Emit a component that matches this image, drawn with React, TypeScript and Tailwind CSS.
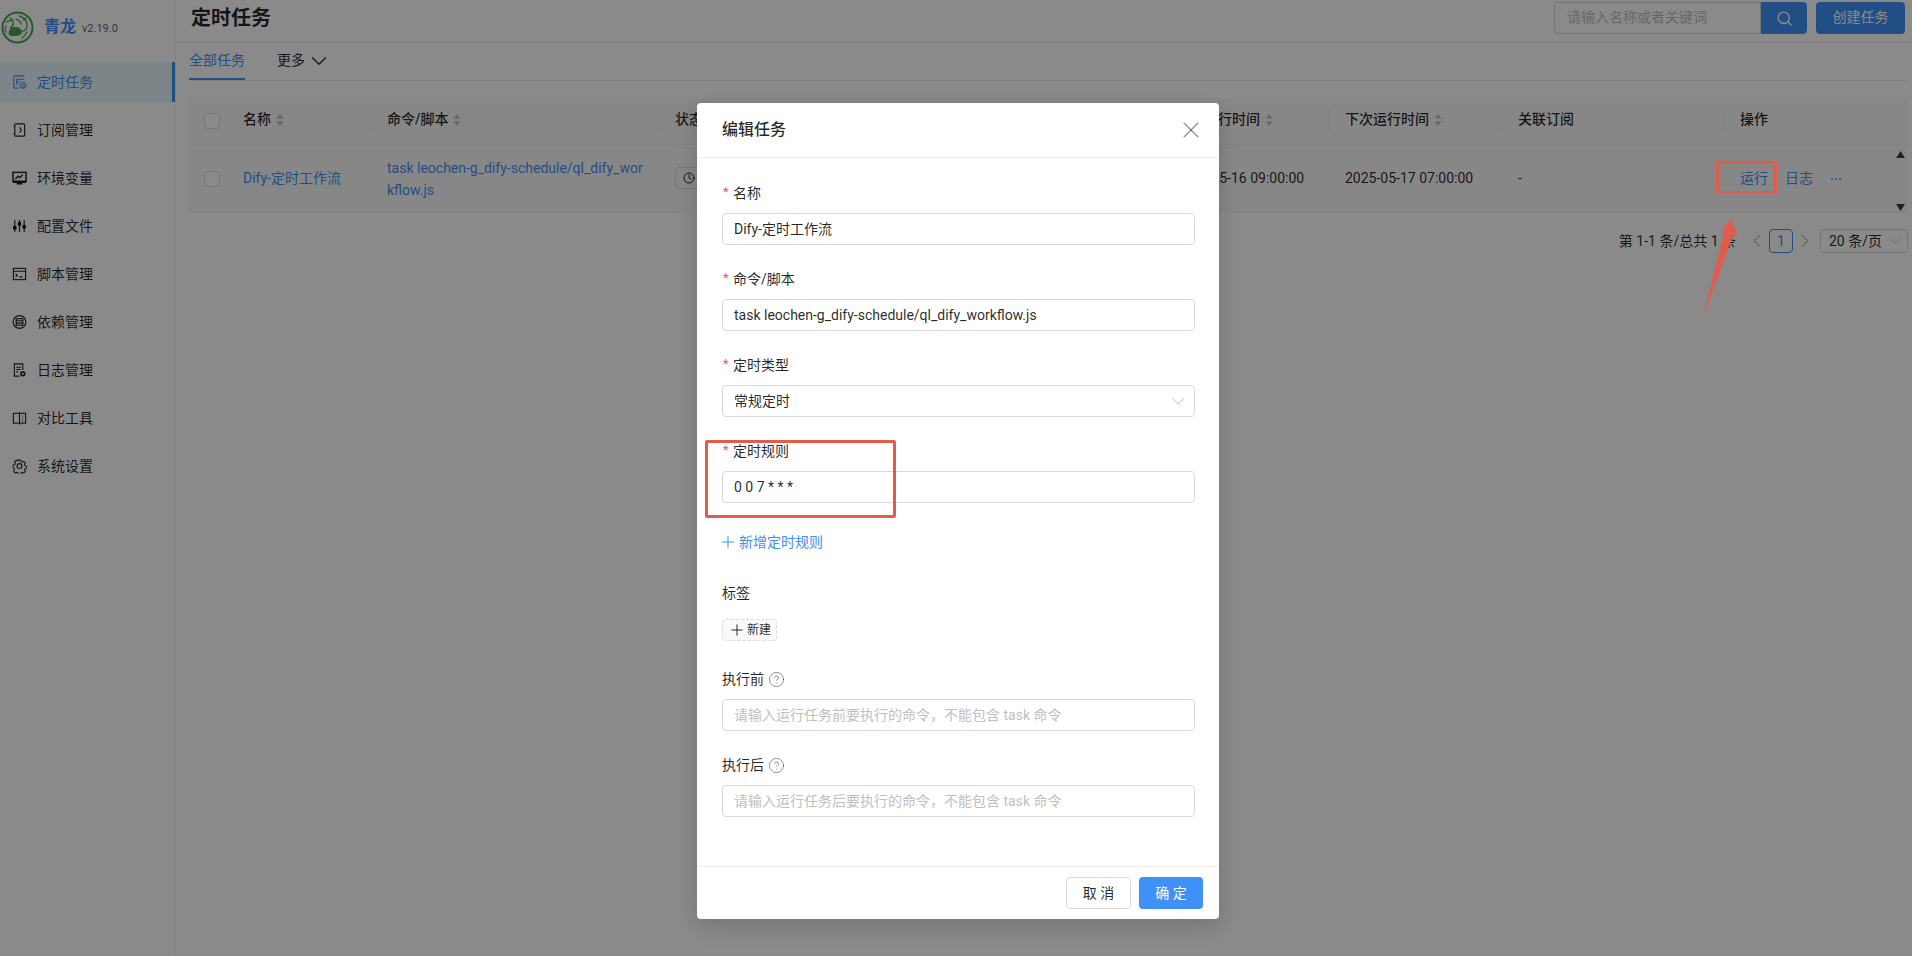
import React from "react";
import { Plus, X, ChevronDown, ChevronLeft, ChevronRight, Search, Clock, CircleHelp, Ellipsis } from "lucide-react";

const FONT = "[font-family:Roboto,'Noto_Sans_CJK_SC',sans-serif]";

const stroke = { fill: "none", stroke: "currentColor", strokeWidth: 1.2 };
const menuIcons: React.ReactNode[] = [
  <g {...stroke}><path d="M2 1.5h11M2 1.5v13M2 14.5h5M5 5h8M5 8h3M5 5v6" /><rect x="8.5" y="8.5" width="6" height="6" rx="3" /><path d="M11.5 10v2h1.5" /></g>,
  <g {...stroke}><rect x="3" y="1.5" width="10.5" height="13" rx="1" /><path d="M3 4H1.5M3 12H1.5M8 5l2 3-2 3" /></g>,
  <g {...stroke}><rect x="1" y="2" width="14" height="9.5" strokeWidth="1.6" /><path d="M3.5 9l3-3 2 1.5 3-3M5 14h6M1 12.5h14" strokeWidth="1.6" /></g>,
  <g {...stroke}><path d="M3 1.5v13M8 1.5v13M13 1.5v13" /><rect x="1.8" y="8.5" width="2.4" height="2.6" fill="currentColor" /><rect x="6.8" y="4.5" width="2.4" height="2.6" fill="currentColor" /><rect x="11.8" y="7.5" width="2.4" height="2.6" fill="currentColor" /></g>,
  <g {...stroke}><rect x="1.5" y="2" width="13" height="12" /><path d="M1.5 5h13M4 8l1.5 1.5L4 11M8 11h3" /></g>,
  <g {...stroke}><circle cx="8" cy="8" r="6.8" /><rect x="4.5" y="4.5" width="7" height="7" /><path d="M4.5 6.7h7M4.5 9.2h7" /></g>,
  <g {...stroke}><path d="M8 14.5H2.5v-13h9V8M4.5 5h5M4.5 7.5h5M4.5 10h2" /><circle cx="11.5" cy="12" r="2" strokeWidth="1.8" /></g>,
  <g {...stroke}><rect x="1.5" y="3" width="13" height="10.5" /><path d="M8 1.5v13.5" /><path d="M11 6h1M11 8.5h1M11 11h1" /></g>,
  <g {...stroke}><path d="M6.6 1h2.8l.4 1.9 1.5.7 1.7-1 1.9 1.9-1 1.7.7 1.5 1.9.4v2.8l-1.9.4-.7 1.5 1 1.7-1.9 1.9-1.7-1-1.5.7-.4 1.9H6.6l-.4-1.9-1.5-.7-1.7 1-1.9-1.9 1-1.7-.7-1.5L.5 9.4V6.6l1.9-.4.7-1.5-1-1.7 1.9-1.9 1.7 1 1.5-.7z" transform="translate(0.8 0.8) scale(0.9)" /><circle cx="8" cy="8" r="2.6" /></g>,
];
const menus = ["定时任务", "订阅管理", "环境变量", "配置文件", "脚本管理", "依赖管理", "日志管理", "对比工具", "系统设置"];

function Sorter() {
  return (
    <svg width="10" height="14" viewBox="0 0 10 14" className="ml-1 shrink-0 text-[#bfbfbf]">
      <path d="M5 1l3.6 4.6H1.4zM5 13L1.4 8.4h7.2z" fill="currentColor" />
    </svg>
  );
}

function Logo() {
  return (
    <svg width="33" height="33" viewBox="0 0 33 33" className="shrink-0 text-[#3fa552]">
      <circle cx="16.5" cy="16.5" r="15" fill="none" stroke="currentColor" strokeWidth="2" />
      <g fill="none" stroke="currentColor" strokeWidth="1.3" strokeLinecap="round">
        <path d="M5 11c3-2 6-2 7 0s0 4-2 5 1 2 3 1" />
        <path d="M9 24c-2-3 0-6 3-7 4-1 7 0 8 3s-1 4-4 4-5 1-7 0z" fill="currentColor" />
        <path d="M18 5c4 1 8 4 8 9s-3 6-5 6M15 8c2 1 5 2 5 5M26 21c-1 2-3 5-5 6M5 15c-1 2-1 4 0 6M22 9l3-2M9 7l3 2" />
      </g>
    </svg>
  );
}

function Sidebar() {
  return (
    <aside className="w-[176px] shrink-0 border-r border-[#f0f0f0] h-full">
      <div className="h-[62px] flex items-center pb-2 pl-px">
        <Logo />
        <span className="ml-[10px] text-[16px] leading-[22px] font-bold text-[#4091f7]">青龙</span>
        <span className="ml-[6px] mt-[3px] text-[11px] leading-[14px] text-[#000000a6]">v2.19.0</span>
      </div>
      <nav className="flex flex-col gap-2">
        {menus.map((m, i) => (
          <div
            key={m}
            className={
              "h-10 flex items-center pl-[12px] text-[14px] " +
              (i === 0 ? "bg-[#e8f5fb] text-[#4091f7] border-r-[3px] border-[#4091f7]" : "text-[#000000d9]")
            }
          >
            <svg width="15" height="16" viewBox="0 0 16 16" className="shrink-0">{menuIcons[i]}</svg>
            <span className="ml-[10px]">{m}</span>
          </div>
        ))}
      </nav>
    </aside>
  );
}

function Header() {
  return (
    <header className="h-[43px] border-b border-[#f0f0f0] flex justify-between pl-[15px] pr-[7px] pt-0.5">
      <h1 className="text-[20px] leading-[32px] font-bold text-[#000000d9]">定时任务</h1>
      <div className="flex h-8">
        <div className="w-[207px] border border-[#d9d9d9] rounded-l-sm pl-3 text-[14px] leading-[28px] text-[#bfbfbf] bg-white">请输入名称或者关键词</div>
        <div className="w-[46px] bg-[#4091f7] rounded-r-sm flex items-center justify-center text-white"><Search size={17} /></div>
        <div className="ml-[9px] w-[89px] bg-[#4091f7] rounded-sm text-white text-[14px] leading-[30px] text-center">创建任务</div>
      </div>
    </header>
  );
}

function Tabs() {
  return (
    <div className="h-[38px] ml-[13px] mr-[4px] border-b border-[#f0f0f0] flex items-end text-[14px]">
      <div className="h-[38px] w-[56px] leading-[36px] text-[#4091f7] border-b-2 border-[#4091f7] text-center">全部任务</div>
      <div className="ml-[32px] h-[38px] leading-[36px] flex items-center text-[#000000d9]">
        <span className="pb-[2px]">更多</span><ChevronDown size={26} strokeWidth={1.1} className="ml-[1px]" />
      </div>
    </div>
  );
}

function Head({ w, label, sort, sep = true }: { w: string; label: string; sort?: boolean; sep?: boolean }) {
  return (
    <div className={w + " h-full flex items-center pl-[16px] justify-between font-medium text-[#000000d9]"}>
      <span className="flex items-center pb-[3px]">{label}{sort && <Sorter />}</span>
      {sep && <span className="w-px h-[22px] bg-[#0000000f]" />}
    </div>
  );
}

function Check() {
  return (
    <div className="w-[38px] h-full flex items-center pl-[15px]"><span className="w-4 h-4 border border-[#d9d9d9] rounded-sm bg-white" /></div>
  );
}

function Table() {
  return (
    <div className="mt-[17px] ml-[13px] mr-[4px] text-[14px] relative">
      <div className="h-[47px] bg-[#fafafa] border-b border-[#f0f0f0] flex items-center">
        <Check />
        <Head w="w-[144px]" label="名称" sort />
        <Head w="w-[288px]" label="命令/脚本" sort />
        <Head w="w-[501px]" label="状态" />
        <Head w="w-[169px]" label="最后运行时间" sort />
        <Head w="w-[173px]" label="下次运行时间" sort />
        <Head w="w-[222px]" label="关联订阅" />
        <Head w="w-[183px]" label="操作" sep={false} />
      </div>
      <div className="h-[68px] bg-[#fafafa] border-b border-[#f0f0f0] flex items-center text-[#000000d9]">
        <Check />
        <div className="w-[144px] pl-[16px] text-[#4091f7]">Dify-定时工作流</div>
        <div className="w-[288px] pl-[16px] pr-[14px] text-[#4091f7] leading-[22px] break-all">task leochen-g_dify-schedule/ql_dify_workflow.js</div>
        <div className="w-[501px] pl-[16px]">
          <span className="inline-flex items-center gap-1 h-[22px] px-[7px] border border-[#d9d9d9] rounded-sm bg-[#fafafa] text-[12px]"><Clock size={12} />空闲中</span>
        </div>
        <div className="w-[169px] pl-[16px]">2025-05-16 09:00:00</div>
        <div className="w-[173px] pl-[16px]">2025-05-17 07:00:00</div>
        <div className="w-[222px] pl-[16px]">-</div>
        <div className="w-[183px] pl-[16px] flex items-center text-[#4091f7]">
          <span>运行</span>
          <span className="ml-[17px]">日志</span>
          <Ellipsis size={14} strokeWidth={1.5} className="ml-[16px]" />
        </div>
      </div>
      <svg width="9" height="60" viewBox="0 0 9 60" className="absolute right-[3px] top-[53px] text-[#3c3c3c]">
        <path d="M4.5 0L9 7H0zM4.5 60L0 53h9z" fill="currentColor" />
      </svg>
    </div>
  );
}

function Pagination() {
  return (
    <div className="mt-4 mr-[4px] h-6 flex items-center justify-end text-[14px] text-[#000000d9]">
      <span>第 1-1 条/总共 1 条</span>
      <ChevronLeft size={22} strokeWidth={1.2} className="ml-[10px] text-[#bfbfbf]" />
      <span className="ml-[1px] w-6 h-6 border border-[#4091f7] rounded-sm text-[#4091f7] text-center leading-[22px]">1</span>
      <ChevronRight size={22} strokeWidth={1.2} className="ml-[1px] text-[#bfbfbf]" />
      <span className="ml-[4px] w-[88px] h-6 border border-[#d9d9d9] rounded-sm pl-2 pr-[2px] flex items-center justify-between">
        20 条/页<ChevronDown size={20} strokeWidth={1.1} className="text-[#bfbfbf]" />
      </span>
    </div>
  );
}

function Label({ text, req, help }: { text: string; req?: boolean; help?: boolean }) {
  return (
    <div className="h-[22px] mb-[10px] flex items-center text-[14px] text-[#000000d9]">
      {req && <span className="w-[11px] pl-[1px] text-[#ff4d4f] text-[13px] leading-[22px]">*</span>}
      <span className="mt-[3px]">{text}</span>
      {help && <CircleHelp size={17} strokeWidth={1.3} className="ml-[4px] mt-[2px] text-[#00000073]" />}
    </div>
  );
}

function Field({ children, placeholder, value, select }: { children: React.ReactNode; placeholder?: string; value?: string; select?: boolean }) {
  return (
    <div className="mb-[22px]">
      {children}
      <div className="h-8 border border-[#d9d9d9] rounded-sm px-[11px] flex items-center justify-between text-[14px] text-[#000000d9]">
        {value ? <span>{value}</span> : <span className="text-[#bfbfbf]">{placeholder}</span>}
        {select && <ChevronDown size={24} strokeWidth={0.9} className="text-[#bfbfbf] -mr-[7px]" />}
      </div>
    </div>
  );
}

function Modal() {
  return (
    <div className="absolute left-[697px] top-[103px] w-[522px] h-[816px] bg-white rounded-sm shadow-[0_6px_16px_rgba(0,0,0,0.1),0_9px_28px_rgba(0,0,0,0.06)] flex flex-col">
      <div className="h-[55px] shrink-0 border-b border-[#f0f0f0] pl-[25px] pr-[14px] flex items-center justify-between">
        <span className="text-[16px] font-medium text-[#000000d9]">编辑任务</span>
        <X size={28} strokeWidth={1} className="text-[#00000073]" />
      </div>
      <div className="flex-1 pt-[23px] pl-[25px] pr-[24px]">
        <Field value="Dify-定时工作流"><Label text="名称" req /></Field>
        <Field value="task leochen-g_dify-schedule/ql_dify_workflow.js"><Label text="命令/脚本" req /></Field>
        <Field value="常规定时" select><Label text="定时类型" req /></Field>
        <Field value="0 0 7 * * *"><Label text="定时规则" req /></Field>
        <div className="h-8 mt-[2px] mb-[24px] flex items-center text-[14px] text-[#4091f7]"><Plus size={20} strokeWidth={1.2} className="-ml-1 mr-[1px] mt-[2px]" /><span className="mt-[3px]">新增定时规则</span></div>
        <div className="mb-[22px]">
          <Label text="标签" />
          <div className="h-8 flex items-center">
            <span className="h-[22px] w-[55px] mt-[2px] border border-dashed border-[#d9d9d9] bg-[#fafafa] rounded-sm flex items-center justify-center text-[12px] text-[#000000d9]"><Plus size={18} strokeWidth={1.3} className="mr-[1px]" />新建</span>
          </div>
        </div>
        <Field placeholder="请输入运行任务前要执行的命令，不能包含 task 命令"><Label text="执行前" help /></Field>
        <Field placeholder="请输入运行任务后要执行的命令，不能包含 task 命令"><Label text="执行后" help /></Field>
      </div>
      <div className="h-[53px] shrink-0 border-t border-[#f0f0f0] pr-4 flex items-center justify-end gap-2 text-[14px]">
        <span className="w-[65px] h-8 border border-[#d9d9d9] rounded-sm text-center leading-[30px] text-[#000000d9]">取 消</span>
        <span className="w-[64px] h-8 bg-[#4091f7] rounded-sm text-center leading-[32px] text-white">确 定</span>
      </div>
    </div>
  );
}

export default function App() {
  return (
    <div className={"relative w-full h-[956px] overflow-hidden bg-white flex " + FONT}>
      <Sidebar />
      <main className="flex-1 min-w-0">
        <Header />
        <Tabs />
        <Table />
        <Pagination />
      </main>
      <div className="absolute inset-0 bg-[#00000075]" />
      <Modal />
      <div className="absolute left-[705px] top-[440px] w-[191px] h-[78px] border-[3px] border-[#e25b4b] rounded-[2px]" />
      <div className="absolute left-[1716px] top-[161px] w-[61px] h-[33px] border-[3px] border-[#e25b4b] rounded-[2px]" />
      <svg width="45" height="105" viewBox="0 0 45 105" className="absolute left-[1700px] top-[216px]">
        <path d="M32 3L37 21L33 19L3 102L25 13L20 15Z" fill="#e25b4b" />
      </svg>
    </div>
  );
}
